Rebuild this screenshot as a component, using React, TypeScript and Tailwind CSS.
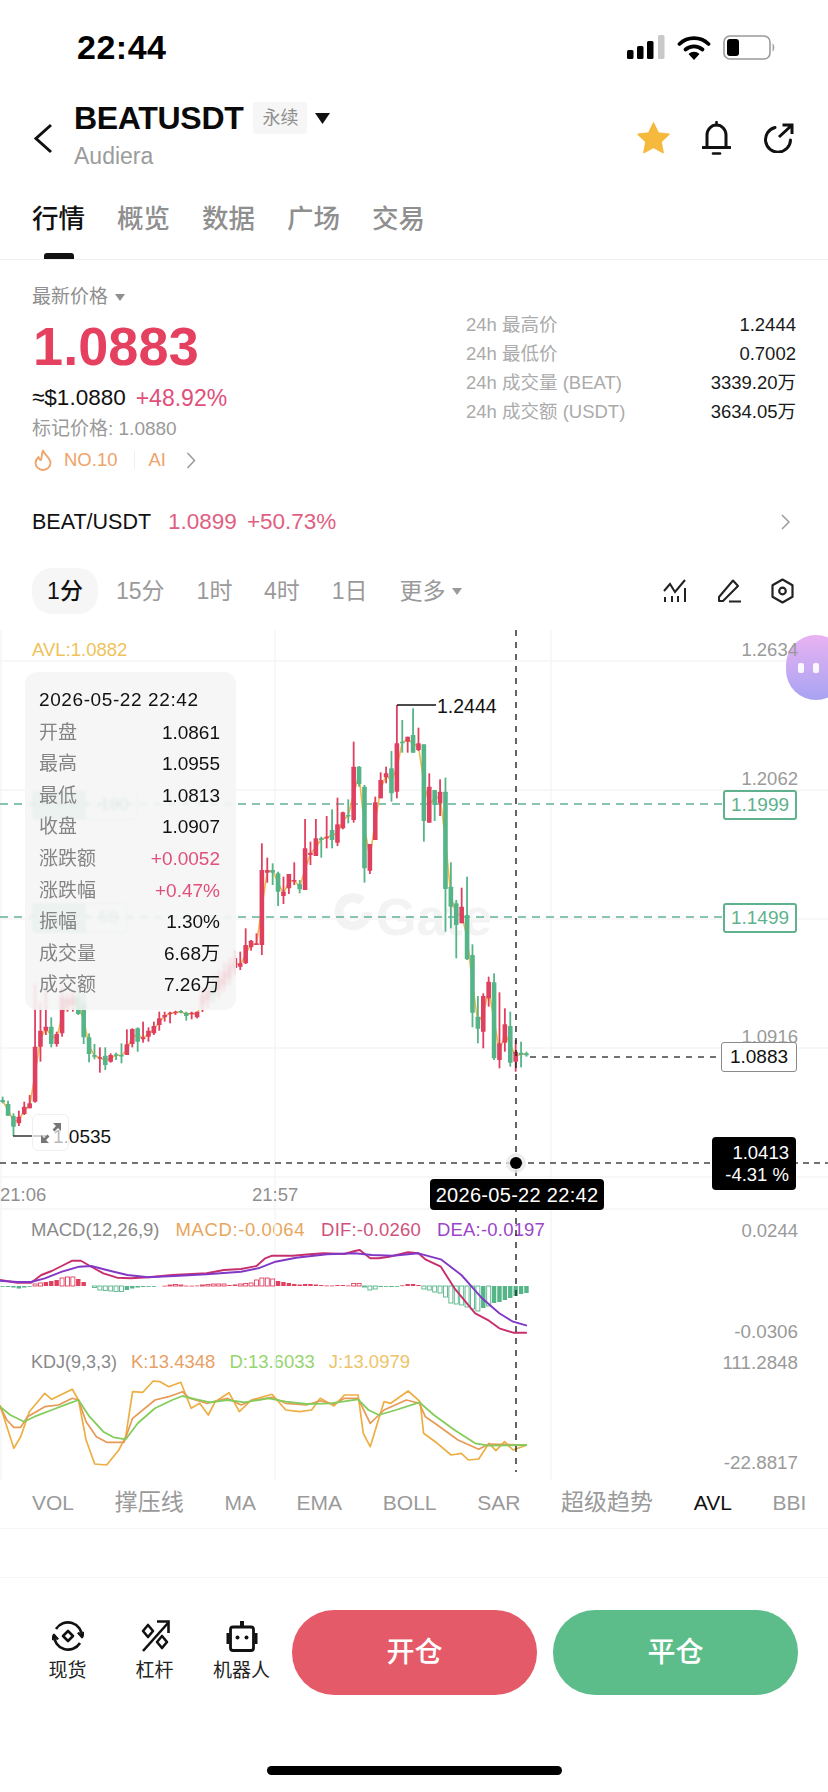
import React from "react";

type C = [number, number, number, number, "r" | "g"];

const g1: C[] = [
  [470,490,480,486,"g"],[482,527,492,527,"g"],[520,588,528,560,"g"],[512,558,530,550,"r"],[485,525,500,522,"r"],[465,505,490,505,"r"],
  [130,488,320,485,"r"],[185,365,272,320,"r"],[140,285,260,272,"r"],[232,322,260,312,"g"],[275,320,282,312,"r"],[140,290,170,280,"r"],
  [160,215,175,200,"r"],[150,215,170,195,"r"],[140,225,170,222,"g"],[150,312,190,292,"g"],[280,367,292,342,"g"],[312,358,345,350,"g"],
  [322,398,352,355,"r"],[322,390,347,375,"g"],[340,368,345,365,"r"],[338,360,343,347,"g"],[310,370,345,348,"g"],[268,345,313,345,"r"],
  [265,322,267,312,"r"],[262,335,265,305,"g"],[245,308,292,298,"r"],[262,305,272,290,"r"],[245,285,258,280,"r"],[215,272,235,255,"r"],
  [215,245,225,232,"r"],[215,250,218,222,"r"],[212,225,215,219,"r"],[210,220,213,217,"g"],[215,242,218,228,"g"],[215,238,218,222,"r"],[215,235,215,232,"r"],
];
const g2: C[] = [
  [988,1012,995,1005,"r"],[982,1008,990,1000,"r"],[975,1003,985,995,"g"],[970,998,978,990,"r"],[962,992,972,985,"r"],[958,985,965,978,"r"],[950,975,958,968,"r"],
];
const g3: C[] = [
  [785,840,820,830,"r"],[715,822,765,820,"r"],[750,782,752,772,"r"],[730,765,760,765,"r"],[460,795,540,765,"r"],[503,578,540,548,"r"],
  [520,585,540,548,"g"],[545,648,550,605,"g"],[560,642,605,618,"r"],[552,612,552,595,"r"],[517,585,570,574,"r"],[570,610,582,598,"g"],
  [387,600,475,600,"r"],[455,525,488,495,"r"],[387,498,445,498,"r"],[440,503,445,450,"g"],[378,475,440,445,"r"],[358,475,420,450,"g"],
  [323,468,403,458,"r"],[365,418,367,415,"r"],[328,400,375,378,"g"],[155,398,230,390,"r"],[228,290,230,282,"g"],[285,578,290,535,"g"],
  [462,552,462,542,"r"],[320,450,337,450,"r"],[247,325,270,325,"r"],
  [230,280,250,262,"r"],[183,335,235,310,"g"],[45,325,160,305,"r"],[90,188,155,160,"g"],[140,188,140,155,"r"],[55,188,135,188,"g"],
  [113,183,160,180,"r"],[163,455,163,393,"g"],[250,398,290,398,"r"],[300,393,300,345,"g"],[268,378,305,340,"r"],[263,725,305,597,"g"],
  [517,715,590,650,"g"],[630,805,640,705,"g"],[593,700,650,700,"r"],[560,810,675,808,"g"],[763,1012,795,968,"g"],[918,1060,980,1016,"g"],
  [910,1075,918,1025,"r"],[860,950,875,925,"r"],[850,1110,877,1105,"g"],[907,1135,1060,1110,"r"],[955,1085,1003,1058,"r"],[965,1130,1008,1118,"g"],
  [1050,1145,1085,1115,"r"],[1055,1132,1088,1095,"g"],[1085,1100,1090,1096,"g"],
];

const candles = [
  ...g1.map((c) => ({ wt: 940 + c[0] / 3, wb: 940 + c[1] / 3, bt: 940 + c[2] / 3, bb: 940 + c[3] / 3, c: c[4] })),
  ...g2.map((c) => ({ wt: c[0], wb: c[1], bt: c[2], bb: c[3], c: c[4] })),
  ...g3.map((c) => ({ wt: 690 + c[0] / 3, wb: 690 + c[1] / 3, bt: 690 + c[2] / 3, bb: 690 + c[3] / 3, c: c[4] })),
].map((c, k) => ({ ...c, x: 2.67 + 5.4 * k }));

const hist = [
  -0.5,-1,-1.5,-2.5,-1.5,-0.7,2,3,4,5,6,8,9,9,7,4,0,-1.5,-4,-4.5,-5,-5.5,-5.5,-4,-2.5,-1.5,-1,-0.7,-0.4,0,0.3,1,1.5,1,0.4,0.3,0.5,1,1.5,2,2,2,1,1.5,2,2.5,3,
  6,8,8,7,5,4,3,2,1.5,2,2,1.5,1,0.5,0.5,1,1,0.5,2.5,2.5,-1,-4,-3,-1,-0.3,-1,-0.3,0.7,2,2,1,-3,-4,-6,-7,-11,-17,-18,-19,-21,-23,-25,-22,-20,-17,-16,-14,-12,-10,-8,-7,
];
const hollow = new Set([6,7,11,12,13,17,18,19,20,21,22,31,32,33,37,38,39,40,41,44,45,46,47,48,49,50,65,66,67,68,69,78,79,80,81,82,83,84,85,86,87,88,90]);

const toPts = (a: number[]) => {
  const out: string[] = [];
  for (let i = 0; i < a.length; i += 2) out.push(`${(a[i] / 2.904).toFixed(1)},${(1190 + a[i + 1] / 3).toFixed(1)}`);
  return out.join(" ");
};
const dif = toPts([0,270,50,278,90,278,120,255,150,243,185,225,210,212,235,212,265,230,300,250,340,263,380,265,430,262,500,255,600,250,650,240,700,237,745,228,770,205,790,197,850,197,900,193,940,190,1000,192,1030,183,1045,180,1075,205,1100,205,1130,200,1185,187,1215,190,1235,208,1280,230,1320,295,1380,370,1420,392,1450,415,1490,428,1530,428]);
const dea = toPts([0,272,50,276,90,276,130,265,180,245,230,230,265,228,310,240,370,255,430,262,520,257,600,253,700,245,750,235,800,215,860,203,950,193,1030,190,1080,195,1140,197,1215,190,1280,208,1340,255,1400,325,1450,370,1490,395,1530,407]);
const kD = toPts([0,650,30,675,70,695,100,680,150,660,200,640,228,630,260,680,300,725,330,742,365,748,400,700,450,655,500,630,530,618,570,628,610,637,660,630,710,637,780,625,830,635,890,642,960,640,1040,628,1070,660,1100,675,1150,660,1218,637,1260,675,1320,720,1380,760,1420,767,1530,765]);
const kK = toPts([0,650,20,690,40,712,60,712,80,680,130,650,170,645,210,625,228,630,250,695,280,740,310,757,360,757,385,685,450,630,490,620,530,605,550,625,600,640,660,625,700,645,730,632,790,622,830,640,890,645,930,632,970,643,1000,625,1040,625,1075,700,1115,660,1180,630,1218,640,1235,680,1270,705,1330,750,1390,778,1420,762,1530,765]);
const kJ = toPts([0,645,20,710,40,775,60,740,85,665,130,610,150,628,210,598,228,630,250,750,275,822,310,825,345,780,365,740,385,605,415,607,445,573,465,575,490,590,525,577,555,655,580,640,605,675,625,635,665,608,695,665,730,630,790,613,830,660,870,665,905,660,930,625,970,648,1000,615,1040,615,1055,730,1075,770,1115,635,1135,640,1185,603,1220,635,1230,730,1270,760,1310,795,1340,790,1360,810,1390,807,1420,760,1440,782,1465,755,1490,780,1530,765]);

const RED = "#e0405f";
const GREEN = "#55b488";

const FONT = "font-['Liberation_Sans','Noto_Sans_CJK_SC',sans-serif]";

function ChartSvg() {
  const avl = candles.map((c) => `${c.x.toFixed(1)},${((c.bt + c.bb) / 2).toFixed(1)}`).join(" ");
  return (
    <svg className="absolute inset-0" width="828" height="850" viewBox="0 630 828 850">
      {[1, 275, 551].map((x) => (
        <line key={x} x1={x} x2={x} y1="630" y2="1480" stroke="#f6f6f6" strokeWidth="1.5" />
      ))}
      {[661, 790, 919, 1048, 1177, 1209].map((y) => (
        <line key={y} x1="0" x2="828" y1={y} y2={y} stroke="#f5f5f5" strokeWidth="1.5" />
      ))}
      {/* watermark ring */}
      <path d="M362 901 A14 14 0 1 0 367 912" fill="none" stroke="#f3f3f3" strokeWidth="9" />
      <line x1="0" x2="722" y1="804" y2="804" stroke="#62b294" strokeWidth="1.5" strokeDasharray="8 6" />
      <line x1="0" x2="722" y1="917" y2="917" stroke="#62b294" strokeWidth="1.5" strokeDasharray="8 6" />
      <polyline points={avl} fill="none" stroke="#f3b84a" strokeWidth="1.6" />
      {candles.map((c, i) => (
        <g key={i} fill={c.c === "r" ? RED : GREEN}>
          <rect x={c.x - 0.9} y={c.wt} width="1.8" height={c.wb - c.wt} />
          <rect x={c.x - 2.3} y={c.bt} width="4.6" height={Math.max(1.5, c.bb - c.bt)} rx="0.5" />
        </g>
      ))}
      <line x1="397" x2="436" y1="705" y2="705" stroke="#111" strokeWidth="1.3" />
      <line x1="13" x2="47" y1="1136" y2="1136" stroke="#333" strokeWidth="1.3" />
      <line x1="530" x2="721" y1="1057" y2="1057" stroke="#444" strokeWidth="1.3" strokeDasharray="6 6" />
      <line x1="0" x2="828" y1="1163" y2="1163" stroke="#444" strokeWidth="1.3" strokeDasharray="6 5" />

      {hist.map((h, k) => {
        if (h === 0) return null;
        const x = 2.67 + 5.4 * k;
        const col = h > 0 ? RED : GREEN;
        const y = h > 0 ? 1286 - h : 1286;
        const hh = Math.abs(h);
        return hollow.has(k) ? (
          <rect key={k} x={x - 2} y={y} width="4" height={hh} fill="#fff" stroke={col} strokeWidth="0.9" />
        ) : (
          <rect key={k} x={x - 2.2} y={y} width="4.4" height={Math.max(hh, 0.8)} fill={col} />
        );
      })}
      <polyline points={dif} fill="none" stroke="#c72f6c" strokeWidth="1.9" strokeLinejoin="round" />
      <polyline points={dea} fill="none" stroke="#8238c6" strokeWidth="1.9" strokeLinejoin="round" />
      <polyline points={kJ} fill="none" stroke="#edae42" strokeWidth="1.7" strokeLinejoin="round" />
      <polyline points={kK} fill="none" stroke="#e69a56" strokeWidth="1.7" strokeLinejoin="round" />
      <polyline points={kD} fill="none" stroke="#84cc5c" strokeWidth="1.8" strokeLinejoin="round" />
      <line x1="516" x2="516" y1="630" y2="1472" stroke="#222" strokeWidth="1.4" strokeDasharray="6 6" />
      <circle cx="516" cy="1163" r="10" fill="#e8e8e8" opacity="0.8" />
      <circle cx="516" cy="1163" r="6" fill="#000" />
    </svg>
  );
}

function Row({ label, value, red }: { label: string; value: string; red?: boolean }) {
  return (
    <div className="flex h-[31.6px] items-center justify-between">
      <span className="text-[19px] text-[#858585]">{label}</span>
      <span className={red ? "text-[19px] text-[#e0507a]" : "text-[19px] text-[#111]"}>{value}</span>
    </div>
  );
}

function Stat({ label, value }: { label: string; value: string }) {
  return (
    <div className="flex h-[29px] items-center justify-between text-[18.5px]">
      <span className="text-[#ababab]">{label}</span>
      <span className="text-[#1a1a1a]">{value}</span>
    </div>
  );
}

function Tab({ label, active }: { label: string; active?: boolean }) {
  return (
    <div className="flex flex-col items-center">
      <span className={active ? "text-[26.5px] leading-[33px] font-medium text-[#111]" : "text-[26.5px] leading-[33px] font-medium text-[#8f8f8f]"}>{label}</span>
      {active && <span className="mt-[17px] block h-[6px] w-[30px] rounded-t-[3px] bg-[#111]" />}
    </div>
  );
}

function Tool({ label, children }: { label: string; children: React.ReactNode }) {
  return (
    <div className="flex w-[87px] flex-col items-center">
      {children}
      <span className="mt-[6px] text-[19px] leading-[26px] text-[#222]">{label}</span>
    </div>
  );
}

export default function App() {
  return (
    <div className={`w-[828px] h-[1792px] overflow-hidden bg-white ${FONT}`}>
      {/* status bar */}
      <div className="flex h-[94px] items-center justify-between pl-[77px] pr-[52px]">
        <span className="text-[34px] leading-none font-bold tracking-[0.5px] text-black">22:44</span>
        <div className="flex items-center gap-[12px]">
          <svg width="38" height="24" viewBox="0 0 38 24">
            <rect x="0" y="15" width="6.5" height="9" rx="1.5" fill="#000" />
            <rect x="10" y="11" width="6.5" height="13" rx="1.5" fill="#000" />
            <rect x="20" y="6" width="6.5" height="18" rx="1.5" fill="#000" />
            <rect x="31" y="0" width="6.5" height="24" rx="1.5" fill="#c9c9c9" />
          </svg>
          <svg width="34" height="25" viewBox="0 0 34 25">
            <path d="M2.5 9 A21 21 0 0 1 31.5 9" fill="none" stroke="#000" strokeWidth="3.8" strokeLinecap="round" />
            <path d="M8.5 14.5 A13 13 0 0 1 25.5 14.5" fill="none" stroke="#000" strokeWidth="3.8" strokeLinecap="round" />
            <path d="M17 25 L11.5 19 A8 8 0 0 1 22.5 19 Z" fill="#000" />
          </svg>
          <svg width="53" height="25" viewBox="0 0 53 25">
            <rect x="1" y="1" width="46" height="23" rx="6" fill="none" stroke="#9b9b9b" strokeWidth="1.6" />
            <rect x="4" y="4" width="12" height="17" rx="3" fill="#000" />
            <path d="M49.5 8.5 C52 9.5 52 15.5 49.5 16.5 Z" fill="#a8a8a8" />
          </svg>
        </div>
      </div>

      {/* header */}
      <div className="flex h-[88px] items-center">
        <svg className="ml-[33px]" width="20" height="31" viewBox="0 0 20 31">
          <path d="M18 2 L3 15.5 L18 29" fill="none" stroke="#111" strokeWidth="3" />
        </svg>
        <div className="ml-[21px] flex flex-col">
          <div className="flex h-[32px] items-center">
            <span className="text-[32px] leading-none font-bold tracking-[-0.3px] text-[#0a0a0a]">BEATUSDT</span>
            <span className="ml-[10px] flex h-[32px] w-[54px] items-center justify-center rounded-[3px] bg-[#f6f6f6] text-[18px] text-[#8f8f8f]">永续</span>
            <svg className="ml-[8px]" width="15" height="11" viewBox="0 0 15 11">
              <path d="M0 0 H15 L7.5 11 Z" fill="#111" />
            </svg>
          </div>
          <span className="h-[40px] text-[23px] leading-[44px] text-[#9c9c9c]">Audiera</span>
        </div>
        <div className="ml-auto flex items-center gap-[32px] pr-[34px]">
          <svg width="33" height="32" viewBox="0 0 34 33">
            <path d="M17 1 L21.8 11.2 L33 12.7 L24.8 20.4 L26.9 31.5 L17 26.1 L7.1 31.5 L9.2 20.4 L1 12.7 L12.2 11.2 Z" fill="#f4b93d" stroke="#f4b93d" strokeWidth="1.5" strokeLinejoin="round" />
          </svg>
          <svg width="29" height="34" viewBox="0 0 29 34">
            <path d="M14.5 1 V4" stroke="#111" strokeWidth="2.6" strokeLinecap="round" />
            <path d="M5 26 V14 a9.5 10 0 0 1 19 0 V26" fill="none" stroke="#111" strokeWidth="3" />
            <path d="M1 26.5 H28" stroke="#111" strokeWidth="3" strokeLinecap="round" />
            <path d="M11 32.5 H18" stroke="#111" strokeWidth="2.6" strokeLinecap="round" />
          </svg>
          <svg width="31" height="30" viewBox="0 0 31 30">
            <path d="M12 4.5 A12.5 12.5 0 1 0 27.5 17" fill="none" stroke="#111" strokeWidth="3" strokeLinecap="round" />
            <path d="M16 14 L28.5 2.5 M19.5 2 H29 V11" fill="none" stroke="#111" strokeWidth="3" />
          </svg>
        </div>
      </div>

      {/* tabs */}
      <div className="flex h-[78px] gap-[32px] border-b border-[#f0f0f0] pl-[32px] pt-[21px]">
        <Tab label="行情" active />
        <Tab label="概览" />
        <Tab label="数据" />
        <Tab label="广场" />
        <Tab label="交易" />
      </div>

      {/* price */}
      <div className="flex h-[230px] justify-between pl-[32px] pr-[32px]">
        <div className="flex flex-col pt-[26px]">
          <div className="flex h-[22px] items-center gap-[7px] text-[19px] text-[#8f8f8f]">
            <span>最新价格</span>
            <svg width="10" height="7" viewBox="0 0 10 7"><path d="M0 0 H10 L5 7 Z" fill="#8f8f8f" /></svg>
          </div>
          <div className="mt-[10px] ml-[1px] h-[56px] text-[54px] leading-[56px] font-bold tracking-[0.1px] text-[#e5405f]">1.0883</div>
          <div className="mt-[10px] flex h-[28px] items-center gap-[10px] text-[22.5px]">
            <span className="text-[#111]">≈$1.0880</span>
            <span className="text-[23px] text-[#e0507a]">+48.92%</span>
          </div>
          <div className="mt-[5px] h-[24px] text-[19px] leading-[24px] text-[#9a9a9a]">标记价格: 1.0880</div>
          <div className="mt-[7px] flex h-[24px] items-center text-[18.5px] text-[#eda36a]">
            <svg className="ml-[2px]" width="18" height="22" viewBox="0 0 18 22">
              <path d="M9 1.5 C10 6 16.5 8.5 16.5 14 A7.5 7 0 0 1 1.5 14 C1.5 11 3 9.5 4.5 8 C5 10 6 11 7 11 C8 8 7.5 5 9 1.5 Z" fill="none" stroke="#eda36a" strokeWidth="1.8" strokeLinejoin="round" />
            </svg>
            <span className="ml-[12px]">NO.10</span>
            <span className="ml-[17px] h-[18px] w-[1px] bg-[#f3eee8]" />
            <span className="ml-[13px]">AI</span>
            <svg className="ml-[20px]" width="10" height="17" viewBox="0 0 10 17">
              <path d="M1.5 1 L8.5 8.5 L1.5 16" fill="none" stroke="#9a9a9a" strokeWidth="1.5" />
            </svg>
          </div>
        </div>
        <div className="flex w-[330px] flex-col pt-[50px]">
          <Stat label="24h 最高价" value="1.2444" />
          <Stat label="24h 最低价" value="0.7002" />
          <Stat label="24h 成交量 (BEAT)" value="3339.20万" />
          <Stat label="24h 成交额 (USDT)" value="3634.05万" />
        </div>
      </div>

      {/* pair */}
      <div className="flex h-[64px] items-center pl-[32px] pr-[38px] text-[21.5px]">
        <span className="text-[#111]">BEAT/USDT</span>
        <span className="ml-[17px] text-[22.5px] text-[#e0607f]">1.0899</span>
        <span className="ml-[10px] text-[22.5px] text-[#e0607f]">+50.73%</span>
        <svg className="ml-auto" width="9" height="16" viewBox="0 0 9 16">
          <path d="M1 1 L8 8 L1 15" fill="none" stroke="#9a9a9a" strokeWidth="1.5" />
        </svg>
      </div>

      {/* intervals */}
      <div className="mt-[14px] flex h-[46px] items-center pl-[32px] pr-[34px] text-[23px] text-[#9a9a9a]">
        <span className="flex h-[46px] w-[66px] items-center justify-center rounded-[20px] bg-[#f6f6f6] font-medium text-[#111]">1分</span>
        <span className="ml-[18px]">15分</span>
        <span className="ml-[32px]">1时</span>
        <span className="ml-[31.5px]">4时</span>
        <span className="ml-[32px]">1日</span>
        <span className="ml-[32px]">更多</span>
        <svg className="ml-[7px]" width="10" height="7" viewBox="0 0 10 7"><path d="M0 0 H10 L5 7 Z" fill="#9a9a9a" /></svg>
        <div className="ml-auto flex items-center gap-[30px]">
          <svg width="24" height="24" viewBox="0 0 24 24" fill="none" stroke="#222" strokeWidth="2">
            <path d="M1 12 L7 5 L12 13 L22 1" />
            <path d="M2 18 V23 M9 17 V23 M15 17 V23 M22 9 V23" />
          </svg>
          <svg width="24" height="24" viewBox="0 0 24 24" fill="none" stroke="#222" strokeWidth="2">
            <path d="M2 18 L2 22 L6 22 L21 7 L16 1.5 Z" strokeLinejoin="round" />
            <path d="M12 22.5 H24" />
          </svg>
          <svg width="23" height="26" viewBox="0 0 23 26" fill="none" stroke="#222" strokeWidth="2.2">
            <path d="M11.5 1.5 L21.5 7.2 V18.8 L11.5 24.5 L1.5 18.8 V7.2 Z" strokeLinejoin="round" />
            <circle cx="11.5" cy="13" r="3.3" />
          </svg>
        </div>
      </div>

      {/* chart */}
      <div className="relative mt-[16px] h-[850px] w-[828px] overflow-hidden">
        {/* watermark */}
        <span className="absolute left-[376px] top-[256px] text-[52px] leading-[62px] font-bold text-[#f3f3f3]">Gate</span>

        {/* indicator legends */}
        <div className="absolute left-[31px] top-[588px] flex h-[24px] items-center gap-[16px] text-[18.5px] whitespace-nowrap">
          <span className="text-[#8a8a8a]">MACD(12,26,9)</span>
          <span className="tracking-[0.6px] text-[#e8a65c]">MACD:-0.0064</span>
          <span className="tracking-[0.2px] text-[#d0527b]">DIF:-0.0260</span>
          <span className="tracking-[0.2px] text-[#9b45c8]">DEA:-0.0197</span>
        </div>
        <div className="absolute left-[31px] top-[720px] flex h-[24px] items-center gap-[14px] text-[18.5px] whitespace-nowrap">
          <span className="text-[18px] text-[#8a8a8a]">KDJ(9,3,3)</span>
          <span className="text-[#e8a065]">K:13.4348</span>
          <span className="text-[#96d46e]">D:13.6033</span>
          <span className="text-[#eec46a]">J:13.0979</span>
        </div>

        {/* position tags, beneath the tooltip */}
        <div className="absolute left-[32px] top-[160px] flex h-[30px] w-[106px] overflow-hidden rounded-[4px] border border-[#a9d9c4] bg-[#b5e0cc]">
          <span className="ml-[53px] flex flex-1 items-center justify-center bg-white text-[17px] text-[#6fb99a]">-100</span>
        </div>
        <div className="absolute left-[32px] top-[273px] flex h-[30px] w-[95px] overflow-hidden rounded-[4px] border border-[#a9d9c4] bg-[#b5e0cc]">
          <span className="ml-[53px] flex flex-1 items-center justify-center bg-white text-[17px] text-[#6fb99a]">-50</span>
        </div>

        <ChartSvg />

        {/* floating bubble */}
        <div className="absolute left-[786px] top-[5px] flex h-[65px] w-[60px] items-center gap-[9px] rounded-full bg-gradient-to-b from-[#e9b2f2] to-[#a7a3f2] pl-[12px]">
          <span className="h-[10px] w-[6px] rounded-[2px] bg-white/90" />
          <span className="h-[10px] w-[6px] rounded-[2px] bg-white/90" />
        </div>

        <span className="absolute left-[32px] top-[8px] text-[18.5px] leading-[24px] text-[#eec35a]">AVL:1.0882</span>

        {/* axis labels */}
        <span className="absolute right-[30px] top-[8px] text-[18.5px] leading-[24px] text-[#9a9a9a]">1.2634</span>
        <span className="absolute right-[30px] top-[137px] text-[18.5px] leading-[24px] text-[#9a9a9a]">1.2062</span>
        <span className="absolute right-[30px] top-[395px] text-[18.5px] leading-[24px] text-[#9a9a9a]">1.0916</span>
        <span className="absolute right-[30px] top-[589px] text-[18.5px] leading-[24px] text-[#9a9a9a]">0.0244</span>
        <span className="absolute right-[30px] top-[690px] text-[18.8px] leading-[24px] text-[#9a9a9a]">-0.0306</span>
        <span className="absolute right-[30px] top-[721px] text-[18.8px] leading-[24px] text-[#9a9a9a]">111.2848</span>
        <span className="absolute right-[30px] top-[821px] text-[18.8px] leading-[24px] text-[#9a9a9a]">-22.8817</span>
        <span className="absolute left-[0px] top-[553px] text-[18.5px] leading-[24px] text-[#8f8f8f]">21:06</span>
        <span className="absolute left-[252px] top-[553px] text-[18.5px] leading-[24px] text-[#8f8f8f]">21:57</span>

        {/* price tags */}
        <span className="absolute left-[723px] top-[160px] flex h-[30px] w-[74px] items-center justify-center rounded-[3px] border-2 border-[#5fb28d] bg-white text-[19px] text-[#5fb28d]">1.1999</span>
        <span className="absolute left-[723px] top-[273px] flex h-[30px] w-[74px] items-center justify-center rounded-[3px] border-2 border-[#5fb28d] bg-white text-[19px] text-[#5fb28d]">1.1499</span>
        <span className="absolute left-[721px] top-[412px] flex h-[30px] w-[76px] items-center justify-center rounded-[3px] border border-[#8a8a8a] bg-white text-[19px] text-[#111]">1.0883</span>
        <span className="absolute left-[437px] top-[64px] text-[19.5px] leading-[24px] font-medium text-[#111]">1.2444</span>
        <span className="absolute left-[53px] top-[495px] text-[19px] leading-[24px] text-[#111]">1.0535</span>

        {/* expand button */}
        <div className="absolute left-[32px] top-[484px] flex h-[37px] w-[37px] items-center justify-center rounded-[6px] border border-[#f0f0f0] bg-white/70">
          <svg width="22" height="22" viewBox="0 0 22 22" fill="#777">
            <path d="M21 1 V9 L18 6 L14.5 9.5 L12.5 7.5 L16 4 L13 1 Z" />
            <path d="M1 21 V13 L4 16 L7.5 12.5 L9.5 14.5 L6 18 L9 21 Z" />
          </svg>
        </div>

        {/* crosshair tags */}
        <div className="absolute left-[712px] top-[507px] flex h-[53px] w-[84px] flex-col items-end justify-center rounded-[4px] bg-black pr-[7px] text-[18.5px] leading-[22px] text-white">
          <span>1.0413</span>
          <span>-4.31 %</span>
        </div>
        <div className="absolute left-[430px] top-[549px] flex h-[31px] w-[174px] items-center justify-center rounded-[4px] bg-black text-[20px] tracking-[0.3px] text-white">2026-05-22 22:42</div>

        {/* tooltip */}
        <div className="absolute left-[25px] top-[42px] h-[338px] w-[211px] rounded-[12px] bg-[#f5f5f5]/85 pl-[14px] pr-[16px] pt-[12px] backdrop-blur-[1.5px]">
          <div className="flex h-[32px] items-center text-[19px] tracking-[0.6px] whitespace-nowrap text-[#111]">2026-05-22 22:42</div>
          <div className="mt-[1px] flex flex-col">
            <Row label="开盘" value="1.0861" />
            <Row label="最高" value="1.0955" />
            <Row label="最低" value="1.0813" />
            <Row label="收盘" value="1.0907" />
            <Row label="涨跌额" value="+0.0052" red />
            <Row label="涨跌幅" value="+0.47%" red />
            <Row label="振幅" value="1.30%" />
            <Row label="成交量" value="6.68万" />
            <Row label="成交额" value="7.26万" />
          </div>
        </div>
      </div>

      {/* indicator tabs */}
      <div className="flex h-[49px] items-center gap-[40.7px] border-b border-[#f5f5f5] pl-[32px] pb-[3px] text-[21px] whitespace-nowrap text-[#9a9a9a]">
        <span>VOL</span>
        <span className="text-[23px]">撑压线</span>
        <span>MA</span>
        <span>EMA</span>
        <span>BOLL</span>
        <span>SAR</span>
        <span className="text-[23px]">超级趋势</span>
        <span className="text-[#111]">AVL</span>
        <span>BBI</span>
      </div>
      <div className="h-[49px] border-b border-[#f5f5f5]" />

      {/* bottom actions */}
      <div className="flex pl-[24px] pt-[32px]">
        <div className="flex pt-[10px]">
          <Tool label="现货">
            <svg width="32" height="32" viewBox="0 0 32 32" fill="none" stroke="#111" strokeWidth="2.6">
              <path d="M4 9 A14 14 0 0 1 29.9 17" />
              <path d="M28 23 A14 14 0 0 1 2.1 15" />
              <path d="M26 12.5 L30 17 L32 12" strokeLinejoin="round" />
              <path d="M6 19.5 L2 15 L0 20" strokeLinejoin="round" />
              <path d="M16 11 L21 16 L16 21 L11 16 Z" strokeLinejoin="round" />
            </svg>
          </Tool>
          <Tool label="杠杆">
            <svg width="30" height="32" viewBox="0 0 30 32" fill="none" stroke="#111" strokeWidth="2.6">
              <path d="M3 31 L28 3" />
              <path d="M17 1.5 H28.5 V13" />
              <path d="M8 5 L13 11 L8 17 L3 11 Z" strokeLinejoin="round" />
              <path d="M22 16 L27 22 L22 28 L17 22 Z" strokeLinejoin="round" />
            </svg>
          </Tool>
          <Tool label="机器人">
            <svg width="32" height="32" viewBox="0 0 32 32" fill="none" stroke="#111" strokeWidth="2.8">
              <path d="M16 1 V6" strokeWidth="4" />
              <rect x="4.5" y="7" width="23" height="23.5" rx="2.5" />
              <path d="M2 13 V24 M30 13 V24" strokeWidth="3" />
              <circle cx="11.5" cy="17.5" r="2" fill="#111" stroke="none" />
              <circle cx="20.5" cy="17.5" r="2" fill="#111" stroke="none" />
            </svg>
          </Tool>
        </div>
        <button className="ml-[7px] flex h-[85px] w-[245px] items-center justify-center rounded-[42px] bg-[#e55a68] text-[28px] font-medium text-white">开仓</button>
        <button className="ml-[16px] flex h-[85px] w-[245px] items-center justify-center rounded-[42px] bg-[#5dbd8a] text-[28px] font-medium text-white">平仓</button>
      </div>

      {/* home indicator */}
      <div className="mx-auto mt-[71px] h-[9px] w-[295px] rounded-full bg-black" />
    </div>
  );
}
